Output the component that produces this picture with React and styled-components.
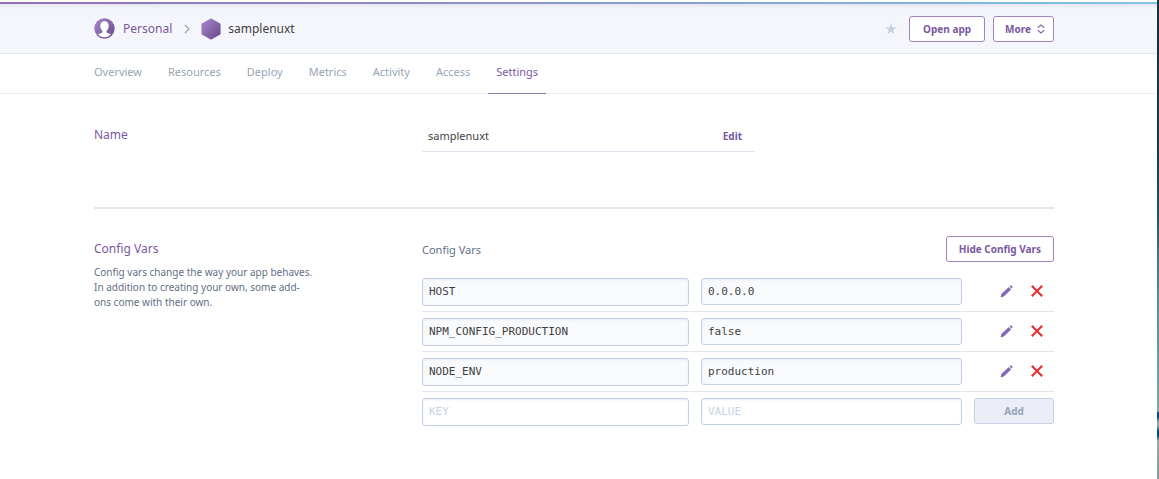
/**
 * App.jsx: Settings page of an app, with its name and config vars
 */

import React, { useState } from "react";
import styled, { createGlobalStyle } from "styled-components";

const GlobalStyle = createGlobalStyle`
  * {
    box-sizing: border-box;
  }

  body {
    margin: 0;
    background: #ffffff;
    font-family: "Noto Sans", "Open Sans", sans-serif;
    font-size: 11px;
    color: #3f3f44;
  }

  h1, h2, h3, p {
    margin: 0;
    font-weight: 400;
  }
`;

const Desktop = styled.div`
  display: flex;
  min-height: 100vh;
`;

const Page = styled.div`
  flex: 1;
  padding-top: 2px;
`;

const DesktopEdge = styled.div`
  width: 2px;
  background: linear-gradient(
    #12303f 0%,
    #163a4c 30%,
    #1d5563 45%,
    #3a6f80 52%,
    #4f9096 62%,
    #6fa39f 80%,
    #7fa8a0 86%,
    #004a80 86%,
    #004a80 87%,
    #7fa8a0 88%,
    #7fa8a0 89%,
    #004a80 90%,
    #004a80 91%,
    #9aa8a0 92%,
    #7f9f98 100%
  );
`;

const TopLine = styled.div`
  height: 2px;
  background: linear-gradient(to right, #8e6fb8, #8f87c4 30%, #7fc4e6);
`;

const Container = styled.div`
  max-width: 969px;
  margin: 0 auto;
  padding-right: 9px;
`;

const Header = styled.header`
  background: linear-gradient(#e6e7ed, #f5f6fb 5px);
  border-bottom: 1px solid #e0e4ef;
`;

const HeaderRow = styled(Container)`
  display: flex;
  align-items: center;
  height: 49px;
`;

const Crumbs = styled.nav`
  display: flex;
  align-items: center;
  flex: 1;
  font-size: 12px;
`;

const CrumbLink = styled.a`
  display: flex;
  align-items: center;
  gap: ${(props) => (props.$current ? "7px" : "8px")};
  color: ${(props) => (props.$current ? "#3f3f44" : "#79589f")};
  text-decoration: none;
`;

const Chevron = styled.svg`
  margin: 0 11px 0 12px;
`;

const Actions = styled.div`
  display: flex;
  align-items: center;
  gap: 8px;
`;

const IconButton = styled.button`
  display: flex;
  padding: 0;
  border: 0;
  background: none;
  cursor: pointer;
`;

const StarButton = styled(IconButton)`
  margin-right: 4px;
`;

const Button = styled.button`
  display: flex;
  align-items: center;
  justify-content: center;
  height: 26px;
  padding: 0 12px;
  border: 1px solid #9f83bd;
  border-radius: 3px;
  background: #ffffff;
  color: #79589f;
  font-family: inherit;
  font-size: 10px;
  font-weight: 700;
  cursor: pointer;

  &:disabled {
    border-color: #c5cfe4;
    background: #ebeef6;
    color: #96a3b6;
    cursor: default;
  }
`;

const OpenButton = styled(Button)`
  min-width: 76px;
`;

const MenuButton = styled(Button)`
  gap: 6px;
  padding: 0 8px 0 11px;
`;

const TabBar = styled.nav`
  border-bottom: 1px solid #ebebf2;
`;

const Tabs = styled(Container)`
  display: flex;
  gap: 10px;
`;

const Tab = styled.a`
  height: 40px;
  margin-bottom: -1px;
  padding: 0 8px;
  border-bottom: 1px solid
    ${(props) => (props.$active ? "#8f79b3" : "transparent")};
  color: ${(props) => (props.$active ? "#79589f" : "#96a5b9")};
  line-height: 36px;
  text-decoration: none;

  &:first-child {
    margin-left: -8px;
  }
`;

const Section = styled.section`
  display: grid;
  grid-template-columns: 328px 1fr;
  padding: ${(props) => (props.$first ? "26px 0 55px" : "27px 0")};
  border-top: ${(props) => (props.$first ? "0" : "2px solid #e2e6ef")};
`;

const SectionTitle = styled.h2`
  color: #79589f;
  font-size: 12px;
  line-height: ${(props) => (props.$tall ? "26px" : "30px")};
`;

const Description = styled.p`
  width: 220px;
  padding-top: 3px;
  color: #5f6f88;
  font-size: 10px;
  line-height: 15px;
`;

const NameRow = styled.div`
  display: flex;
  align-items: center;
  justify-content: space-between;
  width: 333px;
  height: 32px;
  padding: 0 13px 0 6px;
  border-bottom: 1px solid #e0e2ee;
`;

const TextButton = styled(Button)`
  height: 20px;
  padding: 0;
  border: 0;
`;

const VarsHeader = styled.div`
  display: flex;
  align-items: center;
  justify-content: space-between;
  padding-bottom: 10px;
`;

const VarsTitle = styled.h3`
  color: #5f6f88;
  font-size: 11px;
`;

const VarsTable = styled.table`
  width: 100%;
  border-spacing: 0;
  table-layout: fixed;
`;

const Cell = styled.td`
  width: ${(props) => props.$width};
  height: 40px;
  padding: 6px 12px 5px 0;
  vertical-align: top;

  tr:not(:last-child) > & {
    border-bottom: 1px solid #e0e4ec;
  }

  &:last-child {
    padding-right: 0;
  }
`;

const Input = styled.input`
  display: block;
  width: 100%;
  height: 27px;
  padding: 0 6px;
  border: 1px solid #c3cfe6;
  border-radius: 3px;
  background: ${(props) => (props.readOnly ? "#f9fafc" : "#ffffff")};
  box-shadow: inset 0 1px 2px #e9edf5;
  color: #3f3f44;
  font-family: "DejaVu Sans Mono", monospace;
  font-size: 11px;
  outline: none;

  &::placeholder {
    color: #c8d2e6;
    opacity: 1;
  }
`;

const KeyInput = styled(Input)`
  height: 28px;
  padding-bottom: 2px;
`;

const RowActions = styled.div`
  display: flex;
  align-items: center;
  justify-content: flex-end;
  gap: 18px;
  height: 26px;
  padding-right: 11px;
`;

const AddButton = styled(Button)`
  width: 100%;
`;

const AccountIcon = () => (
  <svg width="21" height="21" viewBox="0 0 21 21">
    <defs>
      <linearGradient id="purple" x1="0" y1="0" x2="1" y2="1">
        <stop offset="0" stopColor="#a687ca" />
        <stop offset="1" stopColor="#69498f" />
      </linearGradient>
    </defs>
    <circle cx="10.5" cy="10.5" r="10.2" fill="url(#purple)" />
    <path
      d="M10.500 3.200c-2.700 0-4.200 1.900-4.200 4.700 0 2.100.8 3.600 1.900 4.600.5.500.4 1.900-.3 2.300-1.200.6-2.600.8-3.800 1.500 1.600 1.900 3.700 2.900 6.400 2.900s4.800-1 6.400-2.900c-1.200-.7-2.600-.9-3.800-1.500-.7-.4-.8-1.800-.3-2.300 1.100-1 1.900-2.500 1.900-4.600 0-2.800-1.500-4.700-4.200-4.700z"
      fill="#ffffff"
    />
  </svg>
);

const AppIcon = () => (
  <svg width="20" height="22" viewBox="0 0 20 22">
    <path
      d="M10 1.200 18.800 6.100v9.800L10 20.800 1.200 15.900V6.100z"
      fill="url(#purple)"
      stroke="url(#purple)"
      strokeWidth="1.500"
      strokeLinejoin="round"
    />
  </svg>
);

const StarIcon = () => (
  <svg width="12" height="12" viewBox="0 0 12 12">
    <path
      d="M6 .3l1.400 4 4.300.100-3.400 2.600 1.200 4.200L6 8.800l-3.500 2.400L3.700 7 .3 4.400l4.300-.1z"
      fill="#c5d0e4"
    />
  </svg>
);

const SortIcon = () => (
  <svg width="8" height="10" viewBox="0 0 8 10">
    <path
      d="M1.300 4.100V3.300L4 1l2.700 2.300v.8M1.300 5.900v.8L4 9l2.700-2.300v-.8"
      fill="none"
      stroke="#8866ad"
      strokeWidth="1.100"
    />
  </svg>
);

const PencilIcon = () => (
  <svg width="13" height="13" viewBox="0 0 13 13">
    <path
      d="M.5 12.500l.9-3.400 7.400-7 2.300 2.300-7.300 7.100zM9.500 1.400l.7-.6c.9-.8 2.900.9 2.100 2l-.6.8z"
      fill="#8866b0"
    />
  </svg>
);

const RemoveIcon = () => (
  <svg width="12" height="12" viewBox="0 0 12 12">
    <path d="M.8.8l10.400 10.400M11.200.8L.8 11.200" stroke="#dc3438" strokeWidth="2.200" />
  </svg>
);

const tabs = [
  "Overview",
  "Resources",
  "Deploy",
  "Metrics",
  "Activity",
  "Access",
  "Settings",
];

const configVars = [
  { key: "HOST", value: "0.0.0.0" },
  { key: "NPM_CONFIG_PRODUCTION", value: "false" },
  { key: "NODE_ENV", value: "production" },
];

export default function App() {
  const [newKey, setNewKey] = useState("");
  const [newValue, setNewValue] = useState("");

  return (
    <Desktop>
      <GlobalStyle />
      <Page>
        <TopLine />
        <Header>
          <HeaderRow>
            <Crumbs aria-label="Breadcrumb">
              <CrumbLink href="#personal">
                <AccountIcon />
                Personal
              </CrumbLink>
              <Chevron width="6" height="10" viewBox="0 0 6 10">
                <path
                  d="M1 1l4 4-4 4"
                  fill="none"
                  stroke="#96a5b9"
                  strokeWidth="1.200"
                />
              </Chevron>
              <CrumbLink href="#samplenuxt" $current>
                <AppIcon />
                samplenuxt
              </CrumbLink>
            </Crumbs>
            <Actions>
              <StarButton aria-label="Favorite">
                <StarIcon />
              </StarButton>
              <OpenButton>Open app</OpenButton>
              <MenuButton>
                More
                <SortIcon />
              </MenuButton>
            </Actions>
          </HeaderRow>
        </Header>

        <TabBar>
          <Tabs>
            {tabs.map((tab) => (
              <Tab
                key={tab}
                href={`#${tab.toLowerCase()}`}
                $active={tab === "Settings"}
              >
                {tab}
              </Tab>
            ))}
          </Tabs>
        </TabBar>

        <Container as="main">
          <Section $first>
            <SectionTitle>Name</SectionTitle>
            <NameRow>
              <span>samplenuxt</span>
              <TextButton>Edit</TextButton>
            </NameRow>
          </Section>

          <Section>
            <div>
              <SectionTitle $tall>Config Vars</SectionTitle>
              <Description>
                Config vars change the way your app behaves. In addition to
                creating your own, some add-ons come with their own.
              </Description>
            </div>
            <div>
              <VarsHeader>
                <VarsTitle>Config Vars</VarsTitle>
                <Button>Hide Config Vars</Button>
              </VarsHeader>
              <VarsTable>
                <tbody>
                  {configVars.map((item) => (
                    <tr key={item.key}>
                      <Cell $width="279px">
                        <KeyInput
                          aria-label="Key"
                          defaultValue={item.key}
                          readOnly
                        />
                      </Cell>
                      <Cell>
                        <Input
                          aria-label={`Value of ${item.key}`}
                          defaultValue={item.value}
                          readOnly
                        />
                      </Cell>
                      <Cell $width="80px">
                        <RowActions>
                          <IconButton aria-label={`Edit ${item.key}`}>
                            <PencilIcon />
                          </IconButton>
                          <IconButton aria-label={`Remove ${item.key}`}>
                            <RemoveIcon />
                          </IconButton>
                        </RowActions>
                      </Cell>
                    </tr>
                  ))}
                  <tr>
                    <Cell>
                      <KeyInput
                        aria-label="New key"
                        placeholder="KEY"
                        value={newKey}
                        onChange={(e) => setNewKey(e.target.value)}
                      />
                    </Cell>
                    <Cell>
                      <Input
                        aria-label="New value"
                        placeholder="VALUE"
                        value={newValue}
                        onChange={(e) => setNewValue(e.target.value)}
                      />
                    </Cell>
                    <Cell>
                      <AddButton disabled={!newKey || !newValue}>Add</AddButton>
                    </Cell>
                  </tr>
                </tbody>
              </VarsTable>
            </div>
          </Section>
        </Container>
      </Page>
      <DesktopEdge />
    </Desktop>
  );
}
